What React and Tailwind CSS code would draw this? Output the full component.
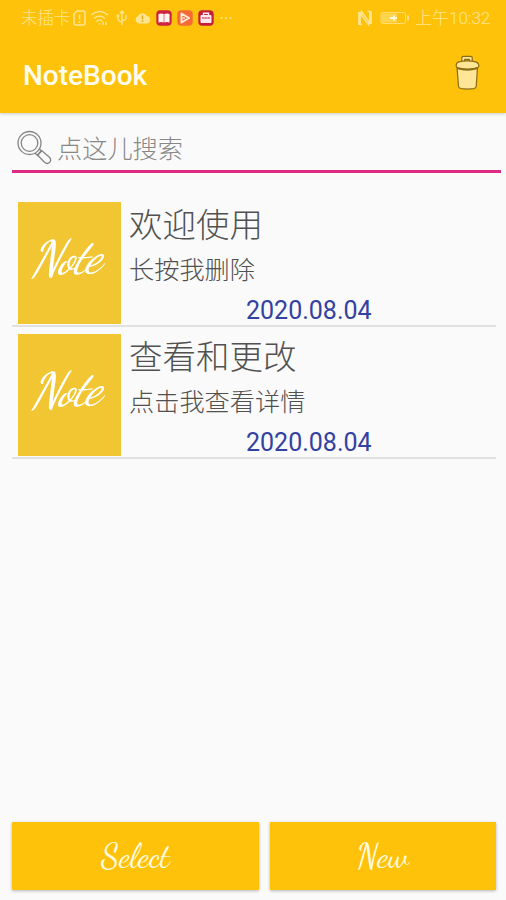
import React from 'react';

const notes = [
  { title: '欢迎使用', body: '长按我删除', date: '2020.08.04' },
  { title: '查看和更改', body: '点击我查看详情', date: '2020.08.04' },
];

function StatusBar() {
  return (
    <div className="flex h-9 items-center pl-[21px] pr-[15px] text-[16.5px] font-light leading-none text-[#ffe591]">
      <span className="w-[51px] translate-y-[1px] whitespace-nowrap">未插卡</span>
      <svg className="h-4 w-[15px]" viewBox="0 0 15 16" fill="none" stroke="currentColor" strokeWidth="1.5">
        <path d="M5 1h6q2 0 2 2v10q0 2-2 2H4q-2 0-2-2V4zM7.5 4.5v5M7.5 11v2" />
      </svg>
      <svg className="ml-[3px] h-4 w-5" viewBox="0 0 20 16" fill="none" stroke="currentColor" strokeWidth="1.4">
        <path d="M1 5q8.500-7 17 0M4 8.500q5.500-5 11 0M6.500 11.500q3-3 6 0M9.500 13v1.500M13 12v3M16 12v3" />
      </svg>
      <svg className="ml-[6px] h-4 w-[12px]" viewBox="0 0 12 16" fill="none" stroke="currentColor" strokeWidth="1.3">
        <path d="M6 1v14M2 6v3q0 2 4 3M10 5v3q0 2-4 2.500M4 3.500l2-2.500 2 2.500" />
        <circle cx="2" cy="6" r=".8" />
      </svg>
      <svg className="ml-[6px] h-4 w-[17px]" viewBox="0 0 16 16">
        <path fill="currentColor" d="M4 13.500a4 4 0 0 1-.5-7.500A5 5 0 0 1 12.500 6a3.800 3.800 0 0 1 0 7.500z" />
        <path d="M8 5.500v3.800M8 10.300v1.500" stroke="#dcaa16" strokeWidth="1.500" />
      </svg>
      <svg className="ml-[5px] h-4 w-4" viewBox="0 0 16 16">
        <rect x=".3" y=".3" width="15.400" height="15.400" rx="4" fill="#ce2340" />
        <path d="M2.500 4q3-1.200 5.200 0v8.500q-2.500-1-5.200 0zM8.300 4q3-1.200 5.200 0v8.500q-2.500-1-5.200 0z" fill="#fff4ee" />
      </svg>
      <svg className="ml-[5px] h-4 w-4" viewBox="0 0 16 16">
        <rect x=".3" y=".3" width="15.400" height="15.400" rx="4" fill="#f66a36" />
        <path d="M4.500 3.500l7.500 4.500-7.500 4.500z" fill="#f66a36" stroke="#ffead7" strokeWidth="2" strokeLinejoin="round" />
        <circle cx="7" cy="8" r="1" fill="#ffead7" />
      </svg>
      <svg className="ml-[5px] h-4 w-4" viewBox="0 0 16 16">
        <rect x=".3" y=".3" width="15.400" height="15.400" rx="4" fill="#c51e3b" />
        <rect x="2.500" y="5" width="11" height="8" rx="1" fill="#ffe9ef" />
        <path d="M5.500 5V3.200h5V5" fill="none" stroke="#ffe9ef" strokeWidth="1.400" />
        <path d="M4 8h8M5 7v2M8 7v2M11 7v2" stroke="#d05b78" strokeWidth="1" />
      </svg>
      <svg className="ml-[6px] h-4 w-3" viewBox="0 0 12 16" fill="currentColor">
        <circle cx="1.500" cy="8" r="1" /><circle cx="6" cy="8" r="1" /><circle cx="10.500" cy="8" r="1" />
      </svg>
      <div className="ml-auto flex items-center">
        <svg className="h-4 w-4" viewBox="0 0 16 16" fill="none" stroke="currentColor">
          <path d="M2.500 15V2M13.500 1v13" strokeWidth="2.800" />
          <path d="M2 2l9.500 12.500V10M4.500 6v-4.500L13.500 14" strokeWidth="1.400" />
          <path d="M3 14.500h2M10.500 1.500h3" strokeWidth="1.500" />
        </svg>
        <svg className="ml-[7px] h-4 w-[30px]" viewBox="0 0 30 16" fill="none" stroke="currentColor">
          <rect x="1" y="2.500" width="24.500" height="11" rx="2" strokeWidth="1" strokeOpacity=".75" />
          <rect x="2" y="3.500" width="15" height="9" fill="currentColor" fillOpacity=".5" stroke="none" />
          <path d="M10 8h7M14 5.500v5" stroke="#fff8d8" strokeWidth="1.800" />
          <path d="M28 5.500v5" strokeWidth="1.800" />
        </svg>
        <span className="ml-[5px] w-[76px] whitespace-nowrap text-[17px]">上午10:32</span>
      </div>
    </div>
  );
}

function TrashIcon() {
  return (
    <svg className="h-[36px] w-[27px] -translate-y-[2px]" viewBox="0 0 28 38" fill="#ffe596" stroke="#8c6d15" strokeWidth="1.300" strokeLinejoin="round">
      <path d="M3 14l1.500 19q.3 2 3 2.500 6.500.8 13 0 2.500-.4 2.700-2.500L24.500 14z" />
      <path d="M8 7V3q0-1.500 1.500-1.500h8Q19 1.500 19 3v4h-3V4.500h-5V7z" />
      <path d="M4 7.500Q14 5 23.500 7.500 26 9 26 11q0 2-2 2.500-10 3-20 0-2-.5-2-2.500 0-2 2-3.500z" />
      <path d="M3.500 14.200q10.500 3 20.500 0" fill="none" strokeWidth="1.900" />
    </svg>
  );
}

function SearchIcon() {
  return (
    <svg className="h-[36px] w-[36px] shrink-0" viewBox="0 0 36 36" fill="none" stroke="#858585" strokeWidth="1.300" strokeLinejoin="round">
      <circle cx="12.500" cy="13" r="11.500" />
      <circle cx="12.500" cy="13" r="8.300" />
      <path d="M22 18.500l2.500 2.500-4 4.500-2.500-2.500" />
      <path d="M24.500 20.500l7.700 6.500q2.700 2.800.5 5.300-2.500 2.300-5.200 0l-7-7.300z" />
    </svg>
  );
}

function NoteRow({ title, body, date }) {
  return (
    <article className="flex h-[132px] border-b-2 border-[#e1e1e1] pl-[6px] pt-[7px]">
      <div className="flex h-[122px] w-[103px] shrink-0 items-center justify-center bg-[#f1c632] pb-[10px] pr-[2px] text-white">
        <span className="origin-center -rotate-3 -skew-x-[18deg] whitespace-nowrap font-['Dancing_Script','Lato',cursive] text-[48px] font-medium leading-none tracking-[-2px]">Note</span>
      </div>
      <div className="ml-[8px] flex flex-col whitespace-nowrap font-light text-[#515151]">
        <h2 className="h-[47px] text-[33.500px] font-light leading-[48px]">{title}</h2>
        <p className="h-[44px] text-[25.200px] leading-[44px]">{body}</p>
        <time className="ml-[117px] h-[32px] text-[25px] font-normal leading-[36px] text-[#3341a0]">{date}</time>
      </div>
    </article>
  );
}

function ActionButton({ label, className }) {
  return (
    <button className={`flex h-[68px] items-center justify-center bg-[#ffc20b] text-[#fffbe0] shadow-[0_1px_3px_rgba(0,0,0,0.28)] ${className}`}>
      <span className="translate-y-[1px] whitespace-nowrap font-['Dancing_Script','Lato',cursive] text-[33.500px] font-normal leading-none">{label}</span>
    </button>
  );
}

export default function App() {
  return (
    <div className="flex h-[900px] w-[506px] flex-col overflow-hidden bg-[#fafafa] font-[Roboto,'Noto_Sans_CJK_SC',sans-serif]">
      <header className="h-[113px] shrink-0 bg-[#ffc20b] shadow-[0_1px_3px_rgba(0,0,0,0.2)]">
        <StatusBar />
        <div className="flex h-[77px] items-center justify-between pl-[23px] pr-[25px]">
          <h1 className="translate-y-[1px] whitespace-nowrap text-[28px] font-medium leading-none text-[#fffdf0]">NoteBook</h1>
          <TrashIcon />
        </div>
      </header>
      <div className="ml-[12px] mt-[13px] flex h-[47px] w-[489px] items-center border-b-[3px] border-[#dc2b85] pl-[5px]">
        <SearchIcon />
        <input className="ml-[4px] min-w-0 flex-1 translate-y-[1px] bg-transparent text-[25.200px] font-light leading-none outline-none placeholder:text-[#888888]" placeholder="点这儿搜索" />
      </div>
      <main className="ml-[12px] mt-[22px] w-[484px]">
        {notes.map((note) => <NoteRow key={note.title} {...note} />)}
      </main>
      <footer className="mb-[10px] mt-auto flex gap-[11px] pl-[12px]">
        <ActionButton label="Select" className="w-[247px]" />
        <ActionButton label="New" className="w-[226px]" />
      </footer>
    </div>
  );
}
